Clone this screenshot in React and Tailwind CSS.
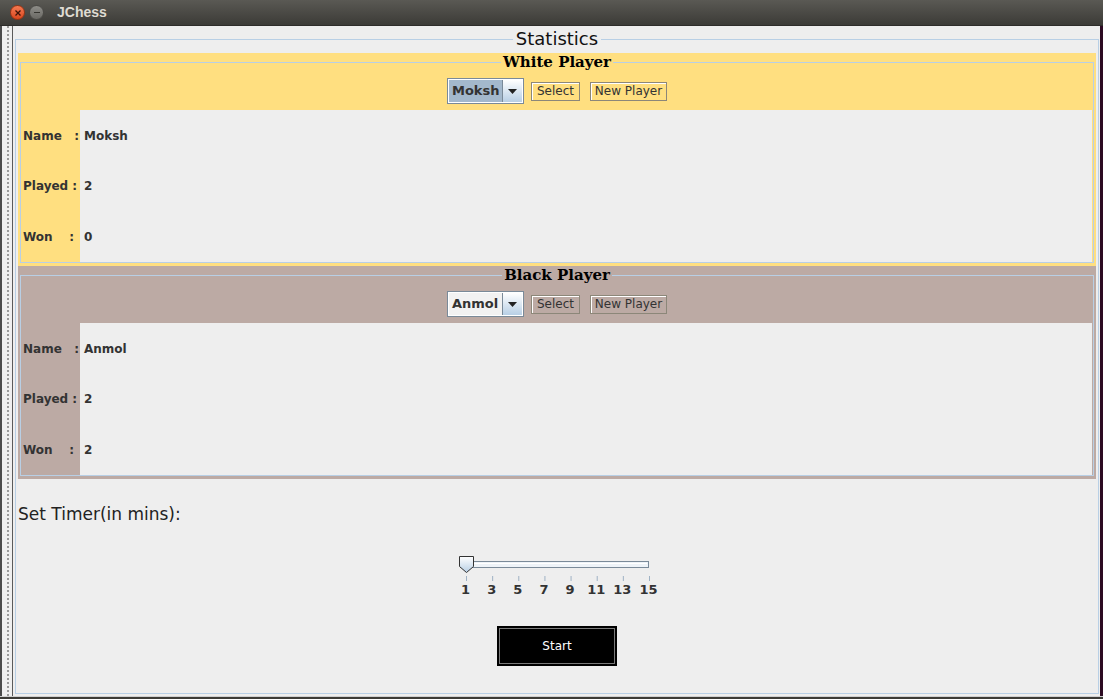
import React from 'react';

const players = [
    { title: "White Player", name: "Moksh", played: 2, won: 0, bg: "bg-[#ffdf80]", focused: true },
    { title: "Black Player", name: "Anmol", played: 2, won: 2, bg: "bg-[#bcaaa4]", focused: false },
];

const ticks = [1, 3, 5, 7, 9, 11, 13, 15];

export default function App() {
    return (
        <div className="w-[1103px] h-[699px] flex flex-col bg-[#3c3b37] overflow-hidden font-['DejaVu_Sans',sans-serif] text-[#333333]">
            <TitleBar />

            <div className="flex flex-1 min-h-0">
                {/* strip of the window behind */}
                <div className="w-[13px] flex">
                    <div className="w-[2px] bg-[#4b4b4b]" />
                    <div className="w-[10px] bg-[#efefef] pl-[5px]">
                        <div className="h-full border-l-2 border-dotted border-[#9a9a9a]" />
                    </div>
                    <div className="w-[1px] bg-[#5a5a5a]" />
                </div>

                <main className="flex-1 flex flex-col bg-[#eeeeee]">
                    <fieldset className="flex-1 mt-[1px] ml-[2px] mr-[1px] mb-[2px] px-[2px] pt-[2px] border border-[#b8cfe5]">
                        <legend align="center" className="mx-auto px-[3px] text-[18px] leading-[24px] text-[#111]">
                            Statistics
                        </legend>

                        {players.map((p) => (
                            <PlayerPanel key={p.title} player={p} />
                        ))}

                        <div className="mt-[23px] text-[17px] leading-[24px] text-[#222]">
                            Set Timer(in mins):
                        </div>

                        <TimerSlider />

                        <button className="block mx-auto mt-[29px] w-[120px] h-[40px] bg-black border-2 border-black shadow-[inset_0_0_0_1px_#7a7a7a] text-white text-[12px]">
                            Start
                        </button>
                    </fieldset>
                </main>

                <div className="w-[3px] bg-[#2c0a22]" />
            </div>

            <div className="h-[3px] border-t border-[#cfcfcf] bg-[#3c3b37]" />
        </div>
    );
}

function TitleBar() {
    return (
        <div className="h-[26px] flex items-center pl-[10px] bg-gradient-to-b from-[#5a5954] to-[#3c3b37] border-b border-[#2e2d2a]">
            <div className="w-[15px] h-[15px] rounded-full bg-gradient-to-b from-[#f47a52] to-[#d9461c] border border-[#9a3312] flex items-center justify-center">
                <svg width="6" height="6" viewBox="0 0 6 6">
                    <path d="M0.5 0.5 L5.5 5.5 M5.5 0.5 L0.5 5.5" stroke="#3b1308" strokeWidth="1.3" />
                </svg>
            </div>
            <div className="ml-[4px] w-[15px] h-[15px] rounded-full bg-gradient-to-b from-[#8e8d88] to-[#6a6964] border border-[#4a4945] flex items-center justify-center">
                <div className="w-[6px] h-[1px] bg-[#35342f]" />
            </div>
            <span className="ml-[13px] text-[14px] font-bold text-[#dfdbd2] font-['Liberation_Sans',sans-serif]">JChess</span>
        </div>
    );
}

function PlayerPanel({ player }) {
    const rows = [
        ["Name   :", player.name],
        ["Played :", player.played],
        ["Won    :", player.won],
    ];
    return (
        <div className={`${player.bg} px-[2px] pb-[3px]`}>
            <fieldset className="border border-[#b8cfe5]">
                <legend align="center" className="mx-auto px-[2px] text-[15px] leading-[18px] font-bold text-black font-['DejaVu_Serif',serif]">
                    {player.title}
                </legend>

                <div className="flex justify-center items-center pt-[7px] pb-[6px]">
                    <ComboBox value={player.name} focused={player.focused} />
                    <button className="ml-[7px] w-[49px] h-[19px] border border-[#8c8779] shadow-[inset_1px_1px_0_#ffffff] text-[12px] leading-none">
                        Select
                    </button>
                    <button className="ml-[10px] w-[77px] h-[19px] border border-[#8c8779] shadow-[inset_1px_1px_0_#ffffff] text-[12px] leading-none">
                        New Player
                    </button>
                </div>

                <div className="grid grid-cols-[59px_1fr] grid-rows-[51px_50px_51px] text-[12px] font-bold">
                    {rows.map(([label, value]) => (
                        <React.Fragment key={label}>
                            <div className="flex items-center pl-[2px] whitespace-pre">{label}</div>
                            <div className="flex items-center pl-[4px] bg-[#eeeeee] mr-[1px]">{value}</div>
                        </React.Fragment>
                    ))}
                </div>
            </fieldset>
        </div>
    );
}

function ComboBox({ value, focused }) {
    return (
        <div className="w-[77px] h-[26px] flex border border-[#7a8a99] bg-white p-[1px]">
            <div className={`flex-1 flex items-center pl-[3px] text-[13px] font-bold ${focused ? "bg-[#a3b8cc]" : "bg-[#f2f2f2]"}`}>
                {value}
            </div>
            <div className="w-[20px] flex items-center justify-center border-l border-[#7a8a99] bg-gradient-to-b from-white to-[#b8cfe5]">
                <svg width="9" height="5" viewBox="0 0 9 5">
                    <path d="M0 0 H9 L4.5 5 Z" fill="#222" />
                </svg>
            </div>
        </div>
    );
}

function TimerSlider() {
    const step = 183 / 7;
    return (
        <div className="w-[209px] mx-auto mt-[28px]">
            <svg width="209" height="28" viewBox="0 0 209 28" className="block">
                <rect x="7.5" y="7.5" width="188" height="6" fill="#eef3f8" stroke="#7a8a99" />
                <line x1="9" y1="9.5" x2="194" y2="9.5" stroke="#ffffff" />
                {ticks.map((t, i) => (
                    <line key={t} x1={13.5 + i * step} y1="22" x2={13.5 + i * step} y2="27" stroke="#9fb2c4" />
                ))}
                <defs>
                    <linearGradient id="thumb" x1="0" y1="0" x2="0" y2="1">
                        <stop offset="0" stopColor="#ffffff" />
                        <stop offset="1" stopColor="#b8cfe5" />
                    </linearGradient>
                </defs>
                <path d="M6.5 2.5 H20.5 V12.5 L13.5 18.5 L6.5 12.5 Z" fill="url(#thumb)" stroke="#333" />
            </svg>
            <div className="grid grid-cols-8 text-[13px] leading-[15px] font-bold text-[#333]">
                {ticks.map((t) => (
                    <span key={t} className="text-center">{t}</span>
                ))}
            </div>
        </div>
    );
}
